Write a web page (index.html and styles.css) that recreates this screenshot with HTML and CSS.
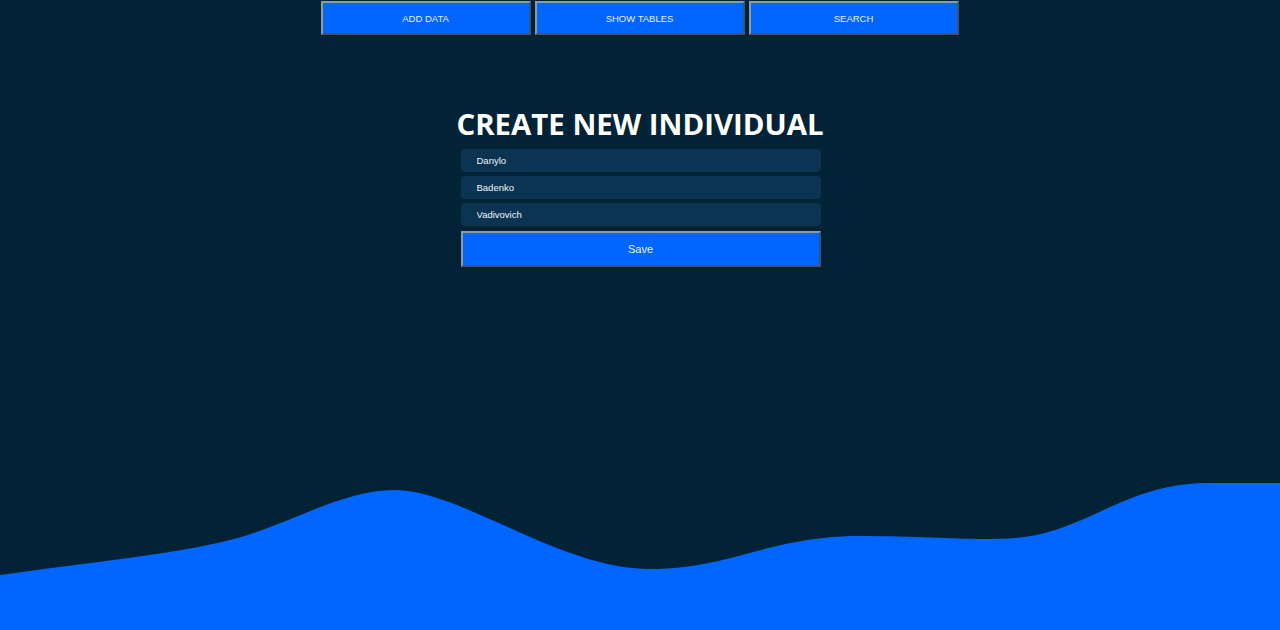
FILE: index.html
```html
<!DOCTYPE html>
<html>
<head>
<meta charset="utf-8">
<link rel="stylesheet" href="styles.css">
</head>
<body>
<div class="page">
  <nav class="nav">
    <button class="nav-btn">ADD DATA</button>
    <button class="nav-btn">SHOW TABLES</button>
    <button class="nav-btn">SEARCH</button>
  </nav>
  <main class="form-wrap">
    <h1 class="title">CREATE NEW INDIVIDUAL</h1>
    <form class="form">
      <input class="field" type="text" value="Danylo">
      <input class="field" type="text" value="Badenko">
      <input class="field" type="text" value="Vadivovich">
      <button class="save" type="button">Save</button>
    </form>
  </main>
  <svg class="wave" viewBox="0 0 1280 150" preserveAspectRatio="none">
    <path d="M0,95 C90,82 170,75 230,60 C290,45 340,10 395,10 C460,10 560,89 650,89 C730,89 770,56 860,56 C940,56 975,62 1025,57 C1090,48 1125,5 1205,3 L1280,3 L1280,150 L0,150 Z" fill="#0066ff"/>
  </svg>
</div>
</body>
</html>
```
FILE: styles.css
```css
html, body {
  margin: 0;
  padding: 0;
  background: #022235;
}
.page {
  height: 630px;
  display: flex;
  flex-direction: column;
  overflow: hidden;
}
.nav {
  display: flex;
  justify-content: center;
  gap: 4px;
  padding-top: 1px;
  padding-right: 1px;
}
.nav-btn {
  width: 210px;
  height: 34px;
  background: #0066ff;
  color: #e6eeff;
  font-family: "Liberation Sans", Arial, sans-serif;
  font-size: 9.5px;
  border: 2px outset #8a9bb0;
  padding: 0;
  margin: 0;
}
.form-wrap {
  display: flex;
  flex-direction: column;
  align-items: center;
  margin-top: 70px;
}
.title {
  margin: 0;
  color: #ffffff;
  font-family: "Open Sans", "DejaVu Sans", sans-serif;
  font-weight: 700;
  font-size: 29.4px;
  line-height: 38px;
  letter-spacing: 0;
}
.form {
  display: flex;
  flex-direction: column;
  gap: 4px;
  width: 360px;
  margin-top: 6px;
  padding-left: 1px;
}
.field {
  height: 23px;
  box-sizing: border-box;
  background: #0a3452;
  border: none;
  border-radius: 4px;
  color: #f2f6fa;
  font-family: "Liberation Sans", Arial, sans-serif;
  font-size: 9.5px;
  font-weight: 400;
  padding: 0 16px;
  margin: 0;
  outline: none;
}
.save {
  margin-top: 1px;
  height: 36px;
  width: 360px;
  background: #0066ff;
  color: #eef3ff;
  border: 2px outset #8a9bb0;
  font-family: "Liberation Sans", Arial, sans-serif;
  font-size: 11px;
}
.wave {
  display: block;
  margin-top: auto;
  width: 1280px;
  height: 150px;
  flex: none;
}
```
